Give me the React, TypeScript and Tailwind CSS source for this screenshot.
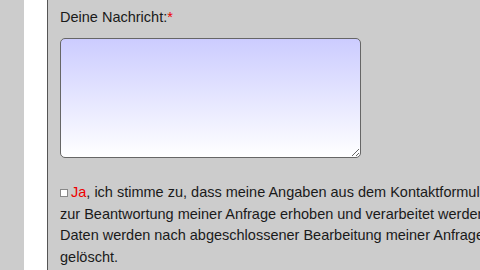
export default function App() {
  return (
    <div className="flex h-[270px] w-[480px] overflow-hidden font-['Liberation_Sans',Arial,sans-serif] text-[14.5px] text-[#1a1a1a]">
      <div className="w-[24px] shrink-0 bg-[#cccccc]" />
      <div className="w-[23px] shrink-0 bg-white" />
      <main className="w-[560px] shrink-0 border-l border-[#555] bg-[#cccccc] pl-[12px] pt-[7px]">
        <label className="block leading-[21px]">
          Deine Nachricht:<span className="text-[#ee0000]">*</span>
        </label>
        <textarea className="mt-[10px] block h-[120px] w-[301px] rounded-[5px] border border-[#666] bg-gradient-to-b from-[#ccccff] to-white outline-none" />
        <p className="mt-[24px] w-[456px] leading-[21.6px]">
          <input
            type="checkbox"
            className="mr-[3px] inline-block h-[8px] w-[8px] appearance-none border border-[#888] bg-white align-middle"
          />
          <span className="text-[#ee0000]">Ja</span>, ich stimme zu, dass meine Angaben aus dem Kontaktformular zur Beantwortung meiner Anfrage erhoben und verarbeitet werden. Die Daten werden nach abgeschlossener Bearbeitung meiner Anfrage gelöscht.
        </p>
      </main>
    </div>
  );
}
